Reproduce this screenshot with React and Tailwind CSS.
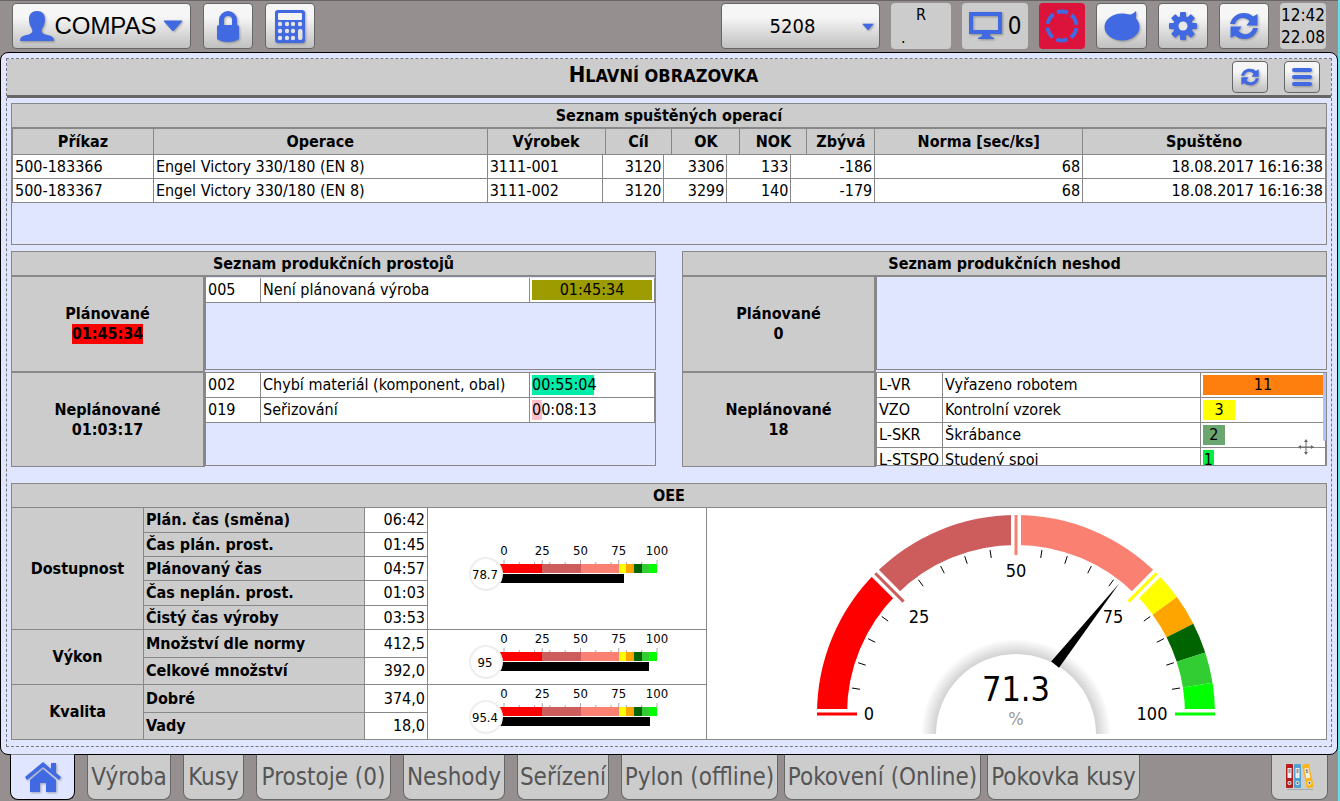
import React from 'react';
import clsx from 'clsx';

const operations = [
  ['500-183366', 'Engel Victory 330/180 (EN 8)', '3111-001', '3120', '3306', '133', '-186', '68', '18.08.2017 16:16:38'],
  ['500-183367', 'Engel Victory 330/180 (EN 8)', '3111-002', '3120', '3299', '140', '-179', '68', '18.08.2017 16:16:38'],
];

const headings = ['Příkaz', 'Operace', 'Výrobek', 'Cíl', 'OK', 'NOK', 'Zbývá', 'Norma [sec/ks]', 'Spuštěno'];
const headingWidths = [141, 334, 118, 67, 68, 67, 68, 208, 243];
const rowWidths = [141, 334, 115, 62, 63, 64, 84, 208, 243];

const plannedStops = [
  { code: '005', name: 'Není plánovaná výroba', value: '01:45:34', share: 100, color: '#9c9c00' },
];

const unplannedStops = [
  { code: '002', name: 'Chybí materiál (komponent, obal)', value: '00:55:04', share: 52, color: '#00eca8' },
  { code: '019', name: 'Seřizování', value: '00:08:13', share: 8, color: '#ffc0cb' },
];

const defects = [
  { code: 'L-VR', name: 'Vyřazeno robotem', value: '11', share: 100, color: '#ff7f0e' },
  { code: 'VZO', name: 'Kontrolní vzorek', value: '3', share: 27, color: '#ffff00' },
  { code: 'L-SKR', name: 'Škrábance', value: '2', share: 18, color: '#6ba56f' },
  { code: 'L-STSPO', name: 'Studený spoj', value: '1', share: 9, color: '#00f040' },
];

const zones = [
  [0, 25, '#ff0000'],
  [25, 50, '#cd5c5c'],
  [50, 75, '#fa8072'],
  [75, 80, '#ffff00'],
  [80, 85, '#ffa500'],
  [85, 90, '#006400'],
  [90, 95, '#32cd32'],
  [95, 100, '#00ff00'],
];

const tabs = [
  ['Výroba', 'w-[84px] mr-3'],
  ['Kusy', 'w-[61px] mr-3'],
  ['Prostoje (0)', 'w-[135px] mr-3'],
  ['Neshody', 'w-[102px] mr-3'],
  ['Seřízení', 'w-[92px] mr-3'],
  ['Pylon (offline)', 'w-[157px] mr-1.5'],
  ['Pokovení (Online)', 'w-[197px] mr-1.5'],
  ['Pokovka kusy', 'w-[153px]'],
];

const raised =
  'flex items-center justify-center rounded border border-[#666] bg-linear-to-b from-[#f6f6f6] from-30% to-[#c0c0c0] text-[#4169e1]';
const iconShadow = 'drop-shadow-[1px_1px_1px_rgba(0,0,0,0.3)]';

const ToolButton = ({ label, className, children }) => (
  <button aria-label={label} className={clsx(raised, className)}>{children}</button>
);

const Caret = ({ className }) => (
  <svg viewBox="0 0 20 12" className={clsx(iconShadow, className)}>
    <path d="M1 1h18L10 11z" fill="#4169e1" stroke="#4169e1" strokeLinejoin="round" />
  </svg>
);

const UserIcon = () => (
  <svg viewBox="0 0 34 32" className={clsx('h-8 w-[34px]', iconShadow)} fill="currentColor">
    <path d="M17 1c5 0 8 3 8 8 0 4-1 7-3 10-1 2 0 4 2 5 5 2 10 1 10 7H0c0-6 5-5 10-7 2-1 3-3 2-5-2-3-3-6-3-10 0-5 3-8 8-8z" />
  </svg>
);

const LockIcon = () => (
  <svg viewBox="0 0 24 32" className={clsx('h-8 w-6', iconShadow)} fill="currentColor">
    <path d="M3 15v-5a9 9 0 0 1 18 0v5q2 0 2 2v12c-5 4-17 4-22 0V17q0-2 2-2zm5 0h8v-5a4 4 0 0 0-8 0z" />
  </svg>
);

const CalculatorIcon = () => (
  <svg viewBox="0 0 30 33" className={clsx('h-[33px] w-[30px]', iconShadow)}>
    <rect width="30" height="33" rx="3" fill="#4169e1" />
    <rect x="3" y="3" width="24" height="7" rx="1" fill="#f4f4f4" />
    <g fill="#e4e4e4">
      {[14, 21, 28].map((y) => [5, 12, 18, 25].map((x) =>
        x === 25 && y > 14 ? null : <circle key={`${x}-${y}`} cx={x} cy={y} r="2.2" />
      ))}
      <rect x="23" y="19" width="4.5" height="11" rx="2" />
    </g>
  </svg>
);

const MonitorIcon = () => (
  <svg viewBox="0 0 33 28" className={clsx('h-7 w-[33px]', iconShadow)} fill="currentColor">
    <path fillRule="evenodd" d="M0 0h33v22H21v2l4 2v1H9v-1l4-2v-2H0zM4 4v14h25V4z" />
  </svg>
);

const ChatIcon = () => (
  <svg viewBox="0 0 36 32" className={clsx('h-8 w-9', iconShadow)} fill="currentColor">
    <ellipse cx="18" cy="17" rx="17.5" ry="13.5" />
    <path d="M22 5c4 0 7-1 10-4 1 4-1 7 1 9l-6 3z" />
  </svg>
);

const GearIcon = () => (
  <svg viewBox="0 0 28 28" className={clsx('h-7 w-7', iconShadow)} fill="currentColor">
    {[0, 45, 90, 135].map((a) => (
      <rect key={a} x="11" width="6" height="28" rx="1" transform={`rotate(${a} 14 14)`} />
    ))}
    <circle cx="14" cy="14" r="10" />
    <circle cx="14" cy="14" r="4.5" fill="#e8e8e8" />
  </svg>
);

const RefreshIcon = ({ className }) => (
  <svg viewBox="0 0 28 28" className={clsx(iconShadow, className)} fill="currentColor">
    {[0, 180].map((a) => (
      <g key={a} transform={`rotate(${a} 14 14)`}>
        <path d="M0 12C2 5 7 1 13.500 1c4 0 7 1 9.500 3.500L27.500 2v11.500H16.500l3-4.500C15 4 7 5 5 12z" />
      </g>
    ))}
  </svg>
);

const HomeIcon = () => (
  <svg viewBox="0 0 36 31" className={clsx('h-[31px] w-9', iconShadow)} fill="currentColor">
    <path d="M18 0 0 15l2 3L18 5l16 13 2-3-5-4V1h-5v6z" />
    <path d="M18 7 5 18v12h10v-9h6v9h10V18z" />
  </svg>
);

const BindersIcon = () => (
  <svg viewBox="0 0 30 28" className="h-7 w-[30px]">
    <path d="M2 26h26v1H2z" fill="#aaa" />
    {[['#b71c1c', 'translate(1 1)'], ['#4fa3d1', 'translate(9 1)'], ['#fbb516', 'translate(17 2) rotate(-12)']].map(([c, t]) => (
      <g key={c} transform={t}>
        <rect width="7" height="24" rx="1" fill={c} />
        <rect x="1.5" y="4" width="4" height="10" fill="#eee" />
        <path d="M2.5 6h2M2.5 8h2" stroke="#444" />
        <circle cx="3.5" cy="19" r="2" fill="#eee" />
        <circle cx="3.5" cy="19" r="1" fill="#555" />
      </g>
    ))}
  </svg>
);

const Toolbar = () => (
  <header className="flex items-start justify-between border-t border-[#666] px-3 pt-0.5 pb-[3px]">
    <div className="flex gap-3">
      <button className={clsx(raised, 'h-[46px] w-[179px]')}>
        <UserIcon />
        <span className="font-['Liberation_Sans',sans-serif] text-2xl text-black">COMPAS</span>
        <Caret className="ml-1.5 h-3 w-5" />
      </button>
      <ToolButton label="Zámek" className="h-[46px] w-[50px]"><LockIcon /></ToolButton>
      <ToolButton label="Kalkulačka" className="h-[46px] w-[50px]"><CalculatorIcon /></ToolButton>
    </div>

    <div className="flex gap-[11px]">
      <div className="relative">
        <select
          aria-label="Pracoviště"
          defaultValue="5208"
          className={clsx(raised, 'h-[46px] w-[159px] appearance-none pr-4 text-center text-xl [text-align-last:center] [&]:text-black')}
        >
          <option>5208</option>
        </select>
        <Caret className="pointer-events-none absolute top-5 right-1.5 h-2 w-3" />
      </div>
      <div className="flex h-[46px] w-[60px] flex-col justify-between rounded bg-[#ccc] pt-0.5 pb-px text-base leading-5">
        <span className="self-center">R</span>
        <span className="pl-2.5">.</span>
      </div>
      <div className="flex h-[46px] w-[66px] items-center justify-center gap-1.5 rounded bg-[#ccc] text-[#4169e1]">
        <MonitorIcon />
        <span className="text-2xl text-black">0</span>
      </div>
      <button aria-label="Stav" className="flex h-[46px] w-[46px] items-center justify-center rounded bg-[#dc143c]">
        <svg viewBox="0 0 34 34" className="h-[34px] w-[34px]">
          <circle cx="17" cy="17" r="14.5" fill="none" stroke="#4169e1" strokeWidth="4" strokeDasharray="11.2 4" strokeDashoffset="-2" />
        </svg>
      </button>
      <ToolButton label="Zprávy" className="h-[46px] w-[51px]"><ChatIcon /></ToolButton>
      <ToolButton label="Nastavení" className="h-[46px] w-[50px]"><GearIcon /></ToolButton>
      <ToolButton label="Obnovit" className="h-[46px] w-[50px]"><RefreshIcon className="h-7 w-7" /></ToolButton>
      <div className="flex h-[46px] w-[46px] flex-col items-center justify-center rounded bg-[#ccc] text-[17px] leading-[22px]">
        <span>12:42</span>
        <span>22.08</span>
      </div>
    </div>
  </header>
);

const Caption = ({ children, thin }) => (
  <h2 className={clsx('border-[#888] bg-[#ccc] pt-px text-center leading-[22px] font-bold', thin ? 'border-b' : 'border-b-2')}>
    {children}
  </h2>
);

const Columns = ({ widths }) => {
  const total = widths.reduce((a, b) => a + b, 0);
  return (
    <colgroup>
      {widths.map((w, i) => <col key={i} style={{ width: `${(w / total) * 100}%` }} />)}
    </colgroup>
  );
};

const Operations = () => (
  <section className="mt-[5px] min-h-[142px] border border-[#888]">
    <Caption>Seznam spuštěných operací</Caption>
    <table className="w-full table-fixed border-separate border-spacing-0 border-l border-[#888] bg-[#ccc]">
      <Columns widths={headingWidths} />
      <thead>
        <tr>
          {headings.map((h) => (
            <th key={h} className="h-[26px] border-r border-b border-[#888] p-0 leading-5">{h}</th>
          ))}
        </tr>
      </thead>
    </table>
    <table aria-label="Seznam spuštěných operací" className="w-full table-fixed border-separate border-spacing-0 border-l border-[#888] bg-white">
      <Columns widths={rowWidths} />
      <tbody>
        {operations.map((row) => (
          <tr key={row[0]}>
            {row.map((cell, i) => (
              <td key={i} className={clsx('h-6 border-r border-b border-[#888] px-0.5 py-0 leading-5 whitespace-nowrap', i > 2 && 'text-right')}>
                {cell}
              </td>
            ))}
          </tr>
        ))}
      </tbody>
    </table>
  </section>
);

const LossTable = ({ label, rows, widths }) => (
  <table aria-label={label} className="w-full table-fixed border-separate border-spacing-0 bg-white">
    <Columns widths={widths} />
    <tbody>
      {rows.map((r) => (
        <tr key={r.code}>
          <td className="h-[25px] border-r border-b border-[#888] py-0 pr-0 pl-0.5 leading-5 whitespace-nowrap">{r.code}</td>
          <td className="h-[25px] border-r border-b border-[#888] px-0.5 py-0 leading-5 whitespace-nowrap">{r.name}</td>
          <td className="h-[25px] border-r border-b border-[#888] px-0.5 py-0 leading-5">
            <div className="text-center whitespace-nowrap" style={{ width: `${r.share}%`, backgroundColor: r.color }}>{r.value}</div>
          </td>
        </tr>
      ))}
    </tbody>
  </table>
);

const LossPanel = ({ title, planned, plannedAlert, unplanned, plannedRows, unplannedRows, widths, scrolled }) => (
  <section>
    <div className="border border-b-0 border-[#888]"><Caption>{title}</Caption></div>
    <div className="flex">
      <div className="w-[194px] shrink-0 border-x border-r-2 border-[#888] bg-[#ccc] text-center leading-5 font-bold">
        <div className="flex h-24 flex-col items-center justify-center border-b-2 border-[#888]">
          <div>Plánované</div>
          <div className={clsx(plannedAlert && 'bg-[#f00]')}>{planned}</div>
        </div>
        <div className="flex h-[94px] flex-col items-center justify-center border-b border-[#888]">
          <div>Neplánované</div>
          <div>{unplanned}</div>
        </div>
      </div>
      <div className="min-w-0 flex-1">
        <div className="h-[93px] overflow-hidden border border-t-0 border-[#888] pt-px">
          <LossTable label={`${title} – plánované`} rows={plannedRows} widths={widths} />
        </div>
        <div className="relative mt-0.5 h-[94px] overflow-hidden border border-[#888]">
          <LossTable label={`${title} – neplánované`} rows={unplannedRows} widths={widths} />
          {scrolled && (
            <>
              <div className="absolute top-0 right-0 h-[68px] w-[3px] rounded-b bg-[#aac4ff]" />
              <svg viewBox="0 0 16 16" className="absolute right-3 bottom-2.5 h-4 w-4" stroke="#666" fill="#666">
                <path d="M8 2v12M2 8h12" />
                <path d="M8 0l2 3H6zM8 16l2-3H6zM0 8l3-2v4zM16 8l-3-2v4z" stroke="none" />
              </svg>
            </>
          )}
        </div>
      </div>
    </div>
  </section>
);

const LinearGauge = ({ value }) => {
  const x = (v) => 47 + v * 1.53;
  return (
    <svg viewBox="0 1 220 52" className="mx-auto h-[52px] w-[220px]" role="img" aria-label={`${value} %`}>
      {[0, 10, 20, 25, 30, 40, 50, 60, 70, 75, 80, 90, 100].map((v) => (
        <path key={v} d={`M${x(v)} ${v % 25 ? 20 : 18}V22`} stroke="#aaa" />
      ))}
      {zones.map(([from, to, color]) => (
        <rect key={from} x={from ? x(from) : 41} y="22" width={x(to) - (from ? x(from) : 41)} height="9" fill={color} shapeRendering="crispEdges" />
      ))}
      <rect x="42" y="32" width={x(value) - 42} height="9" shapeRendering="crispEdges" />
      <circle cx="29" cy="32" r="16" fill="#fff" stroke="#eee" strokeWidth="2" />
      <g textAnchor="middle" className="text-[13px]">
        {[0, 25, 50, 75, 100].map((v) => <text key={v} x={x(v)} y="13">{v}</text>)}
        <text x="28" y="37">{value}</text>
      </g>
    </svg>
  );
};

const RadialGauge = ({ value }) => {
  const cx = 220;
  const cy = 205;
  const point = (v, r) => {
    const a = Math.PI * (1 - v / 100);
    return [cx + r * Math.cos(a), cy - r * Math.sin(a)];
  };
  const line = (v, r1, r2) => `M${point(v, r1)}L${point(v, r2)}`;
  const minor = Array.from({ length: 19 }, (_, i) => (i + 1) * 5).filter((v) => v % 25);

  return (
    <svg viewBox="0 1 440 228" className="mx-auto h-[228px] w-[440px]" role="img" aria-label={`OEE ${value} %`}>
      <defs>
        <radialGradient id="hub" gradientUnits="userSpaceOnUse" cx={cx} cy="225" r="95">
          <stop offset="0.83" stopColor="#cfcfcf" />
          <stop offset="1" stopColor="#fff" />
        </radialGradient>
      </defs>
      {zones.map(([from, to, color]) => (
        <path key={from} fill={color} d={`M${point(from, 199)}A199 199 0 0 1 ${point(to, 199)}L${point(to, 169)}A169 169 0 0 0 ${point(from, 169)}Z`} />
      ))}
      {[[0, '#ff0000'], [25, '#cd5c5c'], [50, '#fa8072'], [75, '#ffff00'], [100, '#00ff00']].map(([v, color]) => (
        <g key={v}>
          <path d={line(v, 201, 167)} stroke="#fff" strokeWidth="10" />
          <path d={line(v, 199, 159)} stroke={color} strokeWidth="3" />
        </g>
      ))}
      {minor.map((v) => <path key={v} d={line(v, 166, 158)} stroke="#000" />)}
      <path d="M125 225a95 95 0 0 1 190 0z" fill="url(#hub)" />
      <path d="M140 226v-1a80 80 0 0 1 160 0v1z" fill="#fff" />
      <g textAnchor="middle" className="text-lg">
        <text x="73" y="211">0</text>
        <text x="123" y="114">25</text>
        <text x="220" y="68">50</text>
        <text x="317" y="114">75</text>
        <text x="356" y="211">100</text>
        <text x="220" y="192" className="text-[34px]">{value}</text>
        <text x="220" y="216" fill="#999">%</text>
      </g>
      <path d="M0 5L104 0L0-5z" transform={`translate(${point(value, 63)}) rotate(${value * 1.8 - 180})`} />
    </svg>
  );
};

const OeeRow = ({ h, label, value, children, after }) => (
  <tr className={h}>
    {children}
    <th className="border-r border-b border-[#888] bg-[#ccc] px-0.5 py-0 text-left leading-5">{label}</th>
    <td className="border-r border-b border-[#888] px-0.5 py-0 text-right leading-5">{value}</td>
    {after}
  </tr>
);

const OeeGroup = ({ span, children }) => (
  <th rowSpan={span} className="border-r border-b border-[#888] bg-[#ccc] p-0">{children}</th>
);

const OeeGauge = ({ span, value }) => (
  <td rowSpan={span} className="border-r border-b border-[#888] p-0"><LinearGauge value={value} /></td>
);

const Oee = () => (
  <section className="mt-4 border border-b-0 border-[#888]">
    <Caption thin>OEE</Caption>
    <table className="w-full table-fixed border-separate border-spacing-0 bg-white">
      <Columns widths={[132, 221, 63, 279, 619]} />
      <tbody>
        <OeeRow
          h="h-[25px]"
          label="Plán. čas (směna)"
          value="06:42"
          after={
            <>
              <OeeGauge span={5} value={78.7} />
              <td rowSpan={9} className="border-b border-[#888] p-0"><RadialGauge value={71.3} /></td>
            </>
          }
        >
          <OeeGroup span={5}>Dostupnost</OeeGroup>
        </OeeRow>
        <OeeRow h="h-6" label="Čas plán. prost." value="01:45" />
        <OeeRow h="h-6" label="Plánovaný čas" value="04:57" />
        <OeeRow h="h-[25px]" label="Čas neplán. prost." value="01:03" />
        <OeeRow h="h-6" label="Čistý čas výroby" value="03:53" />
        <OeeRow h="h-7" label="Množství dle normy" value="412,5" after={<OeeGauge span={2} value={95} />}>
          <OeeGroup span={2}>Výkon</OeeGroup>
        </OeeRow>
        <OeeRow h="h-[27px]" label="Celkové množství" value="392,0" />
        <OeeRow h="h-7" label="Dobré" value="374,0" after={<OeeGauge span={2} value={95.4} />}>
          <OeeGroup span={2}>Kvalita</OeeGroup>
        </OeeRow>
        <OeeRow h="h-[27px]" label="Vady" value="18,0" />
      </tbody>
    </table>
  </section>
);

const Tabs = () => (
  <nav className="flex pr-2.5 pl-2.5 text-[#555]">
    <button aria-label="Domů" className="-mt-px mr-3 flex h-[46px] w-[65px] items-center justify-center rounded-b-lg border border-t-[#888] border-black bg-[#e0e6ff] text-[#4169e1]">
      <HomeIcon />
    </button>
    {tabs.map(([label, size]) => (
      <button key={label} className={clsx('h-[45px] shrink-0 rounded-b-lg border border-t-0 border-[#666] bg-[#ccc] text-2xl whitespace-nowrap', size)}>
        {label}
      </button>
    ))}
    <button aria-label="Dokumenty" className="ml-auto flex h-[45px] w-[57px] items-center justify-center rounded-b-lg border border-t-0 border-[#666] bg-[#ccc]">
      <BindersIcon />
    </button>
  </nav>
);

export default function App() {
  return (
    <div className="min-h-screen border-r-2 border-[#6bdde6] bg-[#968f8f] font-['DejaVu_Sans_Condensed','Noto_Sans',sans-serif] text-base text-black">
      <Toolbar />
      <main className="rounded-lg border border-black bg-[#e0e6ff] px-[5px] pt-[5px] pb-[7px]">
        <div className="border border-dashed border-[#777] pb-1.5">
          <div className="flex h-[39px] items-center border-b-3 border-[#666] bg-[#ccc] pr-[11px]">
            <div className="w-[88px]" />
            <h1 className="flex-1 pb-1 text-center text-lg leading-7 font-bold uppercase first-letter:text-[22px]">Hlavní obrazovka</h1>
            <ToolButton label="Obnovit obrazovku" className="mr-4 h-8 w-9"><RefreshIcon className="h-[18px] w-[18px]" /></ToolButton>
            <ToolButton label="Menu" className="h-8 w-9">
              <svg viewBox="0 0 20 20" className={clsx('h-5 w-5', iconShadow)} stroke="currentColor" strokeWidth="4" strokeLinecap="round">
                <path d="M2 3h16M2 10h16M2 17h16" />
              </svg>
            </ToolButton>
          </div>

          <div className="px-1">
            <Operations />
            <div className="mt-1.5 grid grid-cols-2 gap-[26px]">
              <LossPanel
                title="Seznam produkčních prostojů"
                planned="01:45:34"
                plannedAlert
                unplanned="01:03:17"
                plannedRows={plannedStops}
                unplannedRows={unplannedStops}
                widths={[55, 269, 125]}
              />
              <LossPanel
                title="Seznam produkčních neshod"
                planned="0"
                unplanned="18"
                plannedRows={[]}
                unplannedRows={defects}
                widths={[66, 258, 125]}
                scrolled
              />
            </div>
            <Oee />
          </div>
        </div>
      </main>
      <Tabs />
    </div>
  );
}
